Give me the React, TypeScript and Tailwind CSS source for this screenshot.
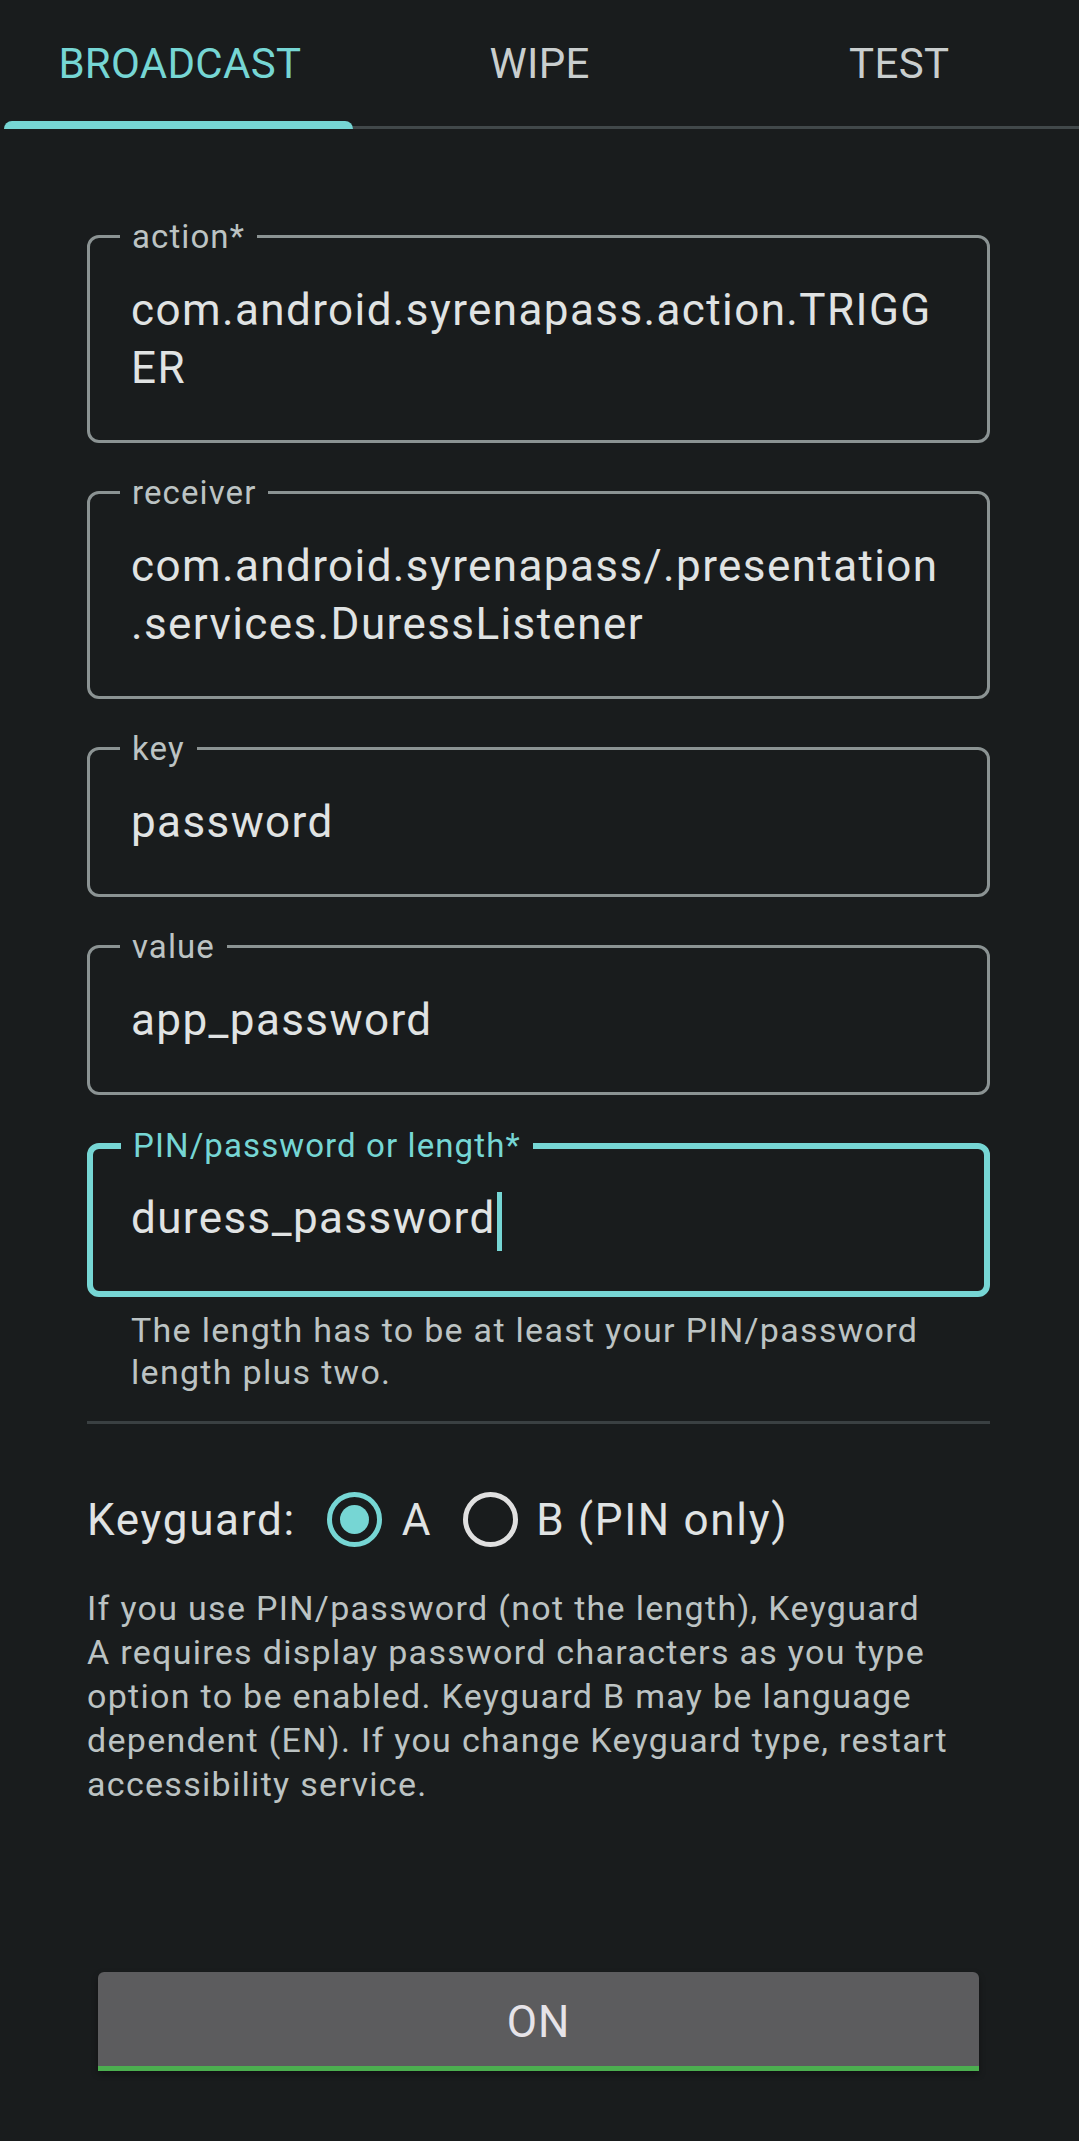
import React from "react"

const tabs = ["BROADCAST", "WIPE", "TEST"]

type FieldProps = {
  label: string
  lines: string[]
  focused?: boolean
}

function OutlinedField({ label, lines, focused }: FieldProps) {
  if (focused) {
    return (
      <div className="relative rounded-[12px] border-[6px] border-[#76d6d4] pl-[38px] pr-[38px] py-[40px]">
        <span className="absolute left-[28px] top-[-20px] bg-[#191c1d] px-[12px] text-[33px] leading-[33px] tracking-[1.1px] text-[#76d6d4]">
          {label}
        </span>
        <div className="text-[44px] leading-[58px] tracking-[1.4px] text-[#e0e3e3]">
          {lines[0]}
          <span className="ml-[1px] inline-block h-[59px] w-[5px] bg-[#76d6d4] align-middle" />
        </div>
      </div>
    )
  }

  return (
    <div className="relative rounded-[12px] border-[3px] border-[#8b9393] pl-[41px] pr-[20px] py-[43px]">
      <span className="absolute left-[30px] top-[-18px] bg-[#191c1d] px-[12px] text-[33px] leading-[33px] tracking-[1.1px] text-[#bcc3c3]">
        {label}
      </span>
      <div className="text-[44px] leading-[58px] tracking-[1.4px] text-[#e0e3e3] whitespace-nowrap">
        {lines.map((line) => (
          <div key={line}>{line}</div>
        ))}
      </div>
    </div>
  )
}

function Radio({ checked }: { checked?: boolean }) {
  return (
    <span
      className={
        checked
          ? "flex h-[55px] w-[55px] items-center justify-center rounded-full border-[5px] border-[#76d6d4]"
          : "flex h-[55px] w-[55px] items-center justify-center rounded-full border-[5px] border-[#e0e0e0]"
      }
    >
      {checked && <span className="h-[29px] w-[29px] rounded-full bg-[#76d6d4]" />}
    </span>
  )
}

export default function App() {
  return (
    <div className="min-h-[2141px] w-[1079px] bg-[#191c1d] font-['Roboto',sans-serif]">
      {/* Tab bar */}
      <div className="flex">
        {tabs.map((tab, i) => (
          <div
            key={tab}
            className={
              i === 0
                ? "flex h-[121px] flex-1 items-center justify-center pt-[6px] text-[42px] tracking-[0.3px] text-[#76d6d4]"
                : "flex h-[121px] flex-1 items-center justify-center pt-[6px] text-[42px] tracking-[0.3px] text-[#c9cece]"
            }
          >
            {tab}
          </div>
        ))}
      </div>
      <div className="flex h-[8px] items-end">
        <div className="ml-[4px] h-[8px] w-[349px] rounded-t-[8px] bg-[#76d6d4]" />
        <div className="h-[3px] flex-1 bg-[#41484a]" />
      </div>

      {/* Form */}
      <div className="ml-[87px] w-[903px] pt-[106px]">
        <div className="flex flex-col gap-[48px]">
          <OutlinedField label="action*" lines={["com.android.syrenapass.action.TRIGG", "ER"]} />
          <OutlinedField
            label="receiver"
            lines={["com.android.syrenapass/.presentation", ".services.DuressListener"]}
          />
          <OutlinedField label="key" lines={["password"]} />
          <OutlinedField label="value" lines={["app_password"]} />
          <OutlinedField label="PIN/password or length*" lines={["duress_password"]} focused />
        </div>

        <p className="mt-[12px] px-[44px] text-[34px] leading-[42px] tracking-[1.3px] text-[#bcc3c3]">
          The length has to be at least your PIN/password
          <br />
          length plus two.
        </p>

        <div className="mt-[28px] h-[3px] bg-[#3a4042]" />

        {/* Keyguard selector */}
        <div className="mt-[63px] flex items-center text-[44px] tracking-[1.7px] text-[#e0e3e3]">
          <span>Keyguard:</span>
          <span className="ml-[31px]">
            <Radio checked />
          </span>
          <span className="ml-[20px]">A</span>
          <span className="ml-[31px]">
            <Radio />
          </span>
          <span className="ml-[18px]">B (PIN only)</span>
        </div>

        <p className="mt-[33px] text-[34px] leading-[44px] tracking-[1.3px] text-[#bcc3c3] whitespace-nowrap">
          If you use PIN/password (not the length), Keyguard
          <br />
          A requires display password characters as you type
          <br />
          option to be enabled. Keyguard B may be language
          <br />
          dependent (EN). If you change Keyguard type, restart
          <br />
          accessibility service.
        </p>

        <button className="ml-[11px] mt-[166px] flex h-[99px] w-[881px] items-center justify-center rounded-t-[6px] border-b-[5px] border-[#4caf50] bg-[#5c5c5e] pt-[7px] text-[44px] tracking-[1px] text-[#e6e3e8] shadow-[0_3px_6px_rgba(0,0,0,0.35)]">
          ON
        </button>
      </div>
    </div>
  )
}
